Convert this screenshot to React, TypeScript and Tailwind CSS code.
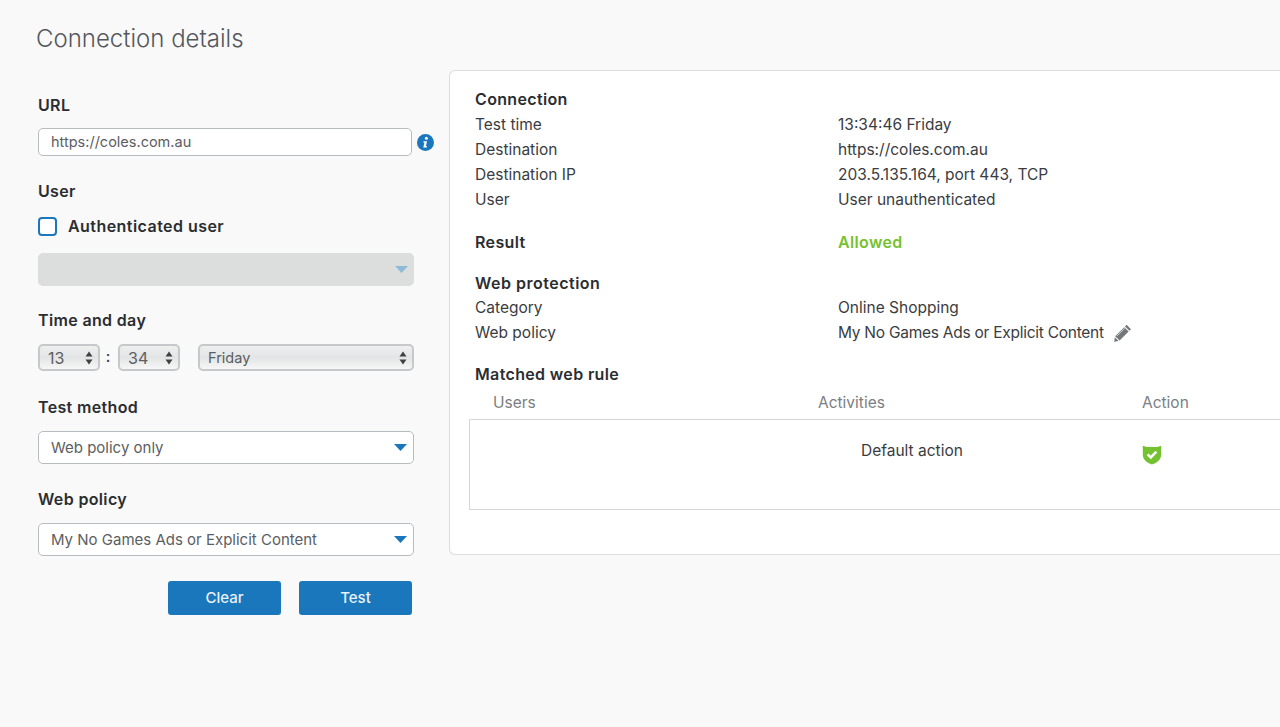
const font = "font-['Inter',sans-serif]";

const Arrows = () => (
  <svg width="8" height="14" viewBox="0 0 8 14" className="shrink-0">
    <path d="M4 0.5 7.5 5.5H0.5Z M4 13.5 0.5 8.5H7.5Z" fill="#3f4245" />
  </svg>
);

const Caret = ({ faded }: { faded?: boolean }) => (
  <svg width="13" height="7" viewBox="0 0 13 7" className="shrink-0">
    <path d="M0 0H13L6.5 7Z" fill={faded ? "#8fb9d8" : "#1a77bc"} />
  </svg>
);

const Label = ({ children }: { children: React.ReactNode }) => (
  <div className="text-[16px] leading-[20px] font-semibold tracking-[0.35px] text-[#2b2d30]">{children}</div>
);

const Dropdown = ({ value }: { value: string }) => (
  <div className="flex h-[33px] w-[376px] items-center justify-between rounded-[5px] border border-[#b9bcbf] bg-white pl-[12px] pr-[6px] text-[15px] text-[#5b5e62]">
    <span className="pt-[2px]">{value}</span>
    <Caret />
  </div>
);

const Spinner = ({ value, className }: { value: React.ReactNode; className: string }) => (
  <div
    className={`flex h-[27px] items-center justify-between rounded-[5px] border-2 border-[#c6c8ca] bg-gradient-to-b from-[#efefef] via-[#e3e4e5] to-[#f7f7f7] pl-[8px] pr-[5px] text-[14.5px] text-[#5b5e62] ${className}`}
  >
    <span>{value}</span>
    <Arrows />
  </div>
);

const Row = ({ label, children }: { label: string; children: React.ReactNode }) => (
  <div className="grid h-[25px] grid-cols-[363px_1fr] items-center text-[15.5px] text-[#3a3c3f]">
    <span>{label}</span>
    <span>{children}</span>
  </div>
);

const Heading = ({ children }: { children: React.ReactNode }) => (
  <div className="h-[25px] text-[16px] leading-[25px] font-semibold tracking-[0.35px] text-[#2b2d30]">{children}</div>
);

export default function App() {
  return (
    <div className={`${font} h-[727px] w-[1280px] overflow-hidden bg-[#f9f9f9] pt-[22px]`}>
      <h1 className="ml-[36px] h-[48px] pt-[1px] text-[24px] leading-[32px] font-light text-[#54575b]">
        Connection details
      </h1>
      <div className="flex">
        {/* Left form */}
        <div className="ml-[38px] w-[411px] shrink-0 pt-[25px]">
          <Label>URL</Label>
          <div className="mt-[13px] flex items-center">
            <div className="flex h-[28px] w-[374px] items-center rounded-[5px] border border-[#b9bcbf] bg-white pl-[12px] pb-[1px] text-[14.5px] text-[#5b5e62]">
              https://coles.com.au
            </div>
            <svg width="17" height="17" viewBox="0 0 17 17" className="ml-[5px]">
              <circle cx="8.5" cy="8.5" r="8.5" fill="#1a77bc" />
              <circle cx="9.4" cy="4.3" r="1.5" fill="#fff" />
              <path d="M6.6 7.2H10L8.9 12.2H10.1L9.8 13.6H6.3L7.4 8.5H6.3Z" fill="#fff" />
            </svg>
          </div>

          <div className="mt-[25px]">
            <Label>User</Label>
          </div>
          <div className="mt-[15px] flex h-[20px] items-center">
            <div className="h-[19px] w-[19px] rounded-[4px] border-2 border-[#1a77bc] bg-white" />
            <span className="ml-[11px] text-[16px] font-semibold tracking-[0.45px] text-[#2b2d30]">
              Authenticated user
            </span>
          </div>
          <div className="mt-[17px] flex h-[33px] w-[376px] items-center justify-end rounded-[5px] bg-[#dcdddd] pr-[6px]">
            <Caret faded />
          </div>

          <div className="mt-[24px]">
            <Label>Time and day</Label>
          </div>
          <div className="mt-[14px] flex items-center">
            <Spinner value={<span className="text-[16px]">13</span>} className="w-[62px]" />
            <span className="w-[18px] -translate-x-px text-center text-[15px] font-medium text-[#3a3c3f]">:</span>
            <Spinner value={<span className="text-[16px]">34</span>} className="w-[62px]" />
            <Spinner value="Friday" className="ml-[18px] w-[216px]" />
          </div>

          <div className="mt-[26px]">
            <Label>Test method</Label>
          </div>
          <div className="mt-[14px]">
            <Dropdown value="Web policy only" />
          </div>

          <div className="mt-[25px]">
            <Label>Web policy</Label>
          </div>
          <div className="mt-[14px]">
            <Dropdown value="My No Games Ads or Explicit Content" />
          </div>

          <div className="mt-[25px] flex w-[374px] justify-end gap-[18px]">
            <button className="h-[34px] w-[113px] rounded-[3px] bg-[#1a77bc] text-[15px] font-medium text-[#e8f2f9]">
              Clear
            </button>
            <button className="h-[34px] w-[113px] rounded-[3px] bg-[#1a77bc] text-[15px] font-medium text-[#e8f2f9]">
              Test
            </button>
          </div>
        </div>

        {/* Result panel */}
        <div className="h-[485px] flex-1 rounded-l-[6px] border border-r-0 border-[#dcdddd] bg-white pl-[25px] pt-[16px]">
          <Heading>Connection</Heading>
          <Row label="Test time">13:34:46 Friday</Row>
          <Row label="Destination">https://coles.com.au</Row>
          <Row label="Destination IP">203.5.135.164, port 443, TCP</Row>
          <Row label="User">User unauthenticated</Row>

          <div className="mt-[17px] grid h-[25px] grid-cols-[363px_1fr] items-center tracking-[0.35px]">
            <span className="text-[16px] font-semibold text-[#2b2d30]">Result</span>
            <span className="text-[16px] font-semibold text-[#74c230]">Allowed</span>
          </div>

          <div className="mt-[17px] h-[24px] text-[16px] leading-[25px] font-semibold tracking-[0.5px] text-[#2b2d30]">
            Web protection
          </div>
          <Row label="Category">Online Shopping</Row>
          <Row label="Web policy">
            <span className="flex items-center">
              <span className="tracking-[-0.26px]">My No Games Ads or Explicit Content</span>
              <svg width="18" height="18" viewBox="0 0 18 18" className="ml-[10px]">
                <path d="M12.6 0.8 17 5.2 15.4 6.8 11 2.4Z" fill="#73777b" />
                <path d="M10.2 3.2 14.6 7.6 5.6 16.6 1.2 12.2Z" fill="#73777b" />
                <path d="M0.8 13.2 4.6 17 0.2 17.8Z" fill="#73777b" />
                <path d="M3 11.9 10.6 4.3" stroke="#fff" strokeWidth="0.7" />
              </svg>
            </span>
          </Row>

          <div className="mt-[17px]">
            <Heading>Matched web rule</Heading>
          </div>
          <div className="-ml-[6px] mt-[3px]">
            <div className="grid h-[29px] grid-cols-[349px_324px_1fr] items-center pb-[4px] text-[15.5px] text-[#7b7e82]">
              <span className="pl-[24px]">Users</span>
              <span>Activities</span>
              <span>Action</span>
            </div>
            <div className="grid h-[91px] grid-cols-[349px_324px_1fr] border border-r-0 border-[#d5d6d8]">
              <div />
              <div className="pl-[42px] pt-[20px] text-[15.5px] leading-[22px] text-[#3a3c3f]">Default action</div>
              <div className="pt-[25px]">
                <svg width="20" height="20" viewBox="0 0 20 20" className="-ml-px">
                  <path
                    d="M10 1.8C7.4 2.4 4 2.2 0.8 0.8V9.5C0.8 14.5 5 17.8 10 19.5 15 17.8 19.2 14.5 19.2 9.5V0.8C16 2.2 12.6 2.4 10 1.8Z"
                    fill="#74c230"
                  />
                  <path d="M5.6 9.4 8.8 12.4 14.4 6.6" fill="none" stroke="#fff" strokeWidth="2.6" />
                </svg>
              </div>
            </div>
          </div>
        </div>
      </div>
    </div>
  );
}
